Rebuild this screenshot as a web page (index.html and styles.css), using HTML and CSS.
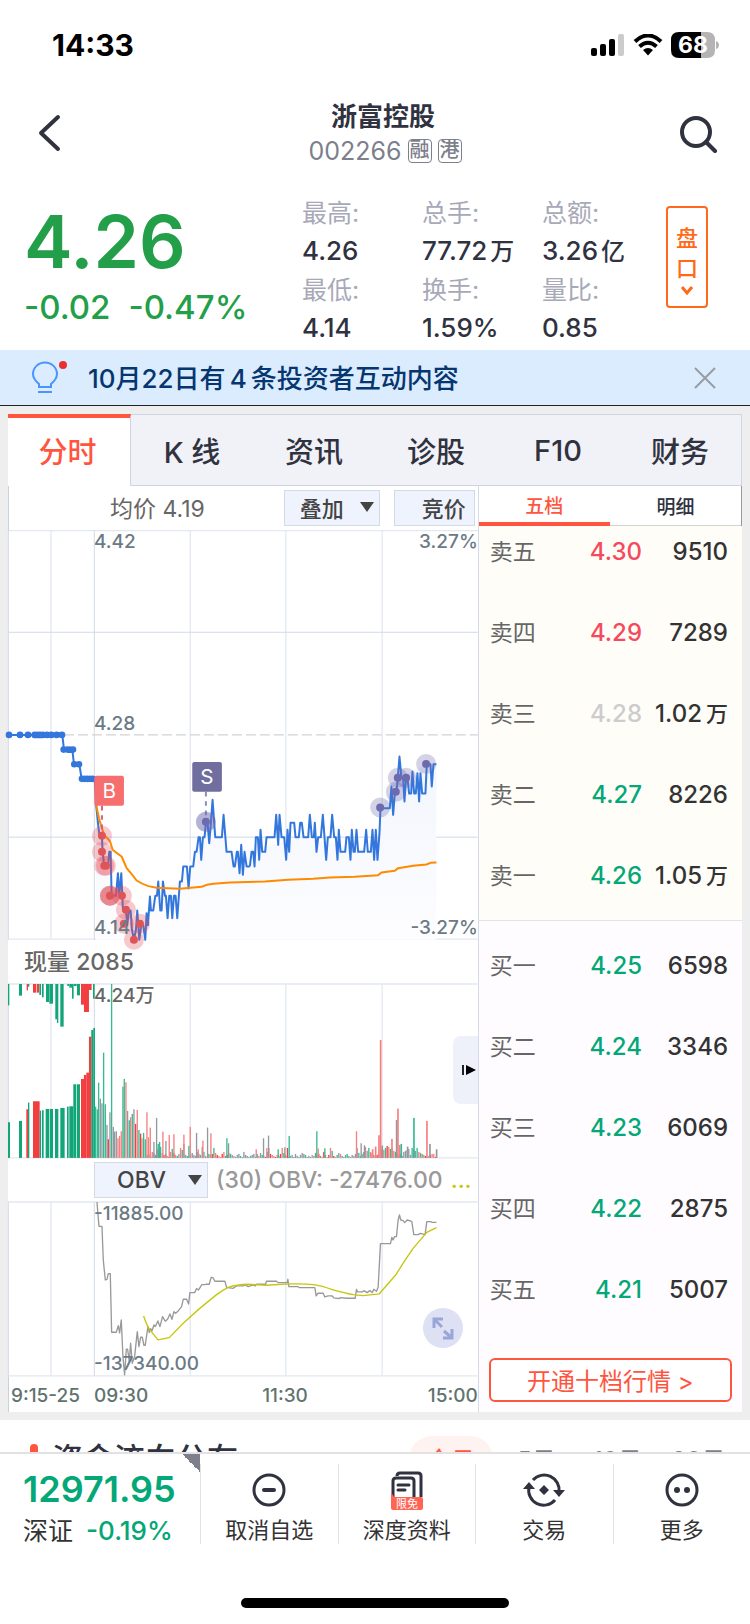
FILE: index.html
```html
<!DOCTYPE html>
<html lang="zh-CN">
<head>
    <meta charset="UTF-8">
    <meta name="viewport" content="width=device-width, initial-scale=1.0">
    <title>浙富控股 002266</title>
    <link rel="stylesheet" href="styles.css">
</head>
<body>

    <!-- 状态栏 -->
    <div class="status-bar">
        <span class="clock">14:33</span>
        <div class="status-icons">
            <svg width="34" height="22" viewBox="0 0 34 22">
                <rect x="0" y="14" width="6" height="8" rx="2"/>
                <rect x="9" y="10" width="6" height="12" rx="2"/>
                <rect x="18" y="5" width="6" height="17" rx="2"/>
                <rect x="27" y="0" width="6" height="22" rx="2" fill="#ccc"/>
            </svg>
            <svg width="30" height="22" viewBox="0 0 30 22">
                <path d="M2 7.500Q15-4.500 28 7.500M6.500 12.500Q15 5 23.500 12.500" fill="none" stroke="#000" stroke-width="4"/>
                <path d="M10 16Q15 12 20 16L15 21.500Z"/>
            </svg>
            <svg width="48" height="26" viewBox="0 0 48 26">
                <path d="M8 0H30V26H8Q0 26 0 18V8Q0 0 8 0Z"/>
                <path d="M30 0H36Q44 0 44 8V18Q44 26 36 26H30ZM45 9Q48 10 48 13Q48 16 45 17Z" fill="#b4b4b4"/>
                <text x="22" y="21" text-anchor="middle" font-size="23" font-weight="700" fill="#fff">68</text>
            </svg>
        </div>
    </div>

    <!-- 标题栏 -->
    <header class="nav">
        <button class="nav-btn" aria-label="返回">
            <svg width="40" height="40" viewBox="0 0 40 40"><path d="M20 4L3 20L20 36" fill="none" stroke="#30323f" stroke-width="4" stroke-linecap="round" stroke-linejoin="round"/></svg>
        </button>
        <div class="nav-title">
            <h1>浙富控股</h1>
            <p>002266 <span class="badge">融</span><span class="badge">港</span></p>
        </div>
        <button class="nav-btn" aria-label="搜索">
            <svg width="40" height="40" viewBox="0 0 40 40"><circle cx="18" cy="19" r="14" fill="none" stroke="#30323f" stroke-width="4"/><path d="M28 29L37 38" stroke="#30323f" stroke-width="4" stroke-linecap="round"/></svg>
        </button>
    </header>

    <!-- 行情 -->
    <section class="quote">
        <div class="price">
            <div class="price-now">4.26</div>
            <div class="price-change"><span>-0.02</span><span>-0.47%</span></div>
        </div>
        <dl class="stats">
            <div><dt>最高:</dt><dd>4.26</dd></div>
            <div><dt>总手:</dt><dd>77.72<i>万</i></dd></div>
            <div><dt>总额:</dt><dd>3.26<i>亿</i></dd></div>
            <div><dt>最低:</dt><dd>4.14</dd></div>
            <div><dt>换手:</dt><dd>1.59%</dd></div>
            <div><dt>量比:</dt><dd>0.85</dd></div>
        </dl>
        <button class="pankou">
            <span>盘</span>
            <span>口</span>
            <svg width="14" height="12" viewBox="0 0 14 12"><path d="M2 3L7 9L12 3" fill="none" stroke="#ff6a1a" stroke-width="3"/></svg>
        </button>
    </section>

    <!-- 提示条 -->
    <div class="notice">
        <svg class="bulb" width="36" height="34" viewBox="0 0 36 34">
            <path d="M7 26V23Q1 18 1 13A12 11.500 0 0 1 25 13Q25 18 19 23V26ZM6 31H20" fill="none" stroke="#4a94ff" stroke-width="2"/>
            <circle cx="31" cy="4" r="4" fill="#e93030"/>
        </svg>
        <a href="#">10月22日有<i>4</i>条投资者互动内容</a>
        <button class="close" aria-label="关闭">
            <svg width="22" height="22" viewBox="0 0 22 22"><path d="M1 1L21 21M21 1L1 21" stroke="#999ca3" stroke-width="2"/></svg>
        </button>
    </div>

    <main class="panel">
        <nav class="tabs">
            <button class="active">分时</button>
            <button>K 线</button>
            <button>资讯</button>
            <button>诊股</button>
            <button>F10</button>
            <button>财务</button>
        </nav>

        <div class="content">
            <div class="charts">
                <div class="toolbar">
                    <span class="avg">均价 4.19</span>
                    <button class="tool">叠加 <svg width="14" height="10" viewBox="0 0 14 10"><path d="M0 0H14L7 10Z" fill="#444"/></svg></button>
                    <button class="tool tool-right">竞价</button>
                </div>

                <!-- 分时图 -->
                <div class="chart">
                    <svg viewBox="0 0 1410 1230">
                        <defs>
                            <linearGradient id="area" x1="0" y1="0" x2="0" y2="1">
                                <stop offset="0" stop-color="#f3f6fd"/>
                                <stop offset="1" stop-color="#fdfdff"/>
                            </linearGradient>
                        </defs>
                        <path class="grid" d="M129 0V1230M547 0V1230M834 0V1230M1123 0V1230M0 2H1410M0 1228H1410"/>
                        <path class="grid-dark" d="M1 0V1230M259 0V1230M0 307H1410M0 922H1410"/>
                        <path d="M0 615H1410" stroke="#cfd3d6" stroke-width="4" stroke-dasharray="30 12"/>
                        <g transform="translate(-24 510)">
                            <path fill="url(#area)" d="M288 325L335 588L402 720L450 600L540 545L585 456L638 370L690 456L800 440L900 412L1130 456L1142 325L1195 234L1281 193H1310V720H288Z"/>
                            <path class="line-price" d="M24 105H187L192 149H217L222 193H238L245 237H284L289 320L294 369L299 412H306L308 456L313 500H324L328 456H332L335 588H348L354 520L358 588L364 520L369 632H378L382 676L386 640L392 632L396 690L402 720L408 690L412 632L418 720L424 676H430L436 720L440 640L444 676L450 590L453 632H460L466 588H471L475 545L481 632H485L489 545L495 588H498L503 655L508 588H513L517 655L522 588H527L532 655L540 545H546L550 500H561L566 566L571 500H580L585 456H590L596 412H600L604 480L609 412H614L618 369H623L628 430L633 369L638 300L646 412H666L671 345L680 456H695L701 500H705L711 456H714L719 520L724 435L729 525L734 456L740 500H750"/>
                            <path class="line-price" transform="translate(690 0)" d="M60 500L65 456H70L74 500L78 412H84L88 480L92 390L97 456H106L110 412H134L139 345L145 435L149 345L155 412H163L169 480L173 390L178 456L182 369H193L197 412H207L211 369H216L221 412H235L240 345L246 412H252L255 369L260 456L265 412H273L279 345L289 480L294 412H302L307 345L313 412H318L323 480L327 390L332 456H346L350 412H357L362 480L366 390L371 456H375L380 390L385 456H403L409 390L414 456H423L428 390L433 480L438 390L443 480L449 400L452 325H480L485 260L490 345L495 281L500 276L504 234L509 170L515 234H520L524 305L529 234H533L538 281H544L548 215L553 281H558L563 220L568 305L572 220L577 281H587L591 193H602L606 260L611 193H620"/>
                            <path class="line-avg" d="M289 318L297 355L312 405L330 424L338 450Q350 460 365 470L380 505Q395 522 410 542Q425 552 445 559L470 564L540 567L605 561Q620 554 640 552L690 548L795 545L865 540L940 537L990 533L1065 531L1135 526L1145 518L1185 513L1195 505L1240 498L1280 494L1292 489L1310 488"/>
                            <!-- 集合竞价点 -->
                            <path class="dots" d="M27 105h0M60 105h0M84 105h0M104 105h0M112 105h0M120 105h0M128 105h0M141 105h0M154 105h0M170 105h0M186 105h0M191 149h0M203 149h0M211 149h0M219 149h0M223 193h0M237 193h0M246 237h0M254 237h0M262 237h0M270 237h0M278 237h0"/>
                            <path d="M306 318V400" stroke="#d9627a" stroke-width="6" stroke-dasharray="14 14"/>
                            <path d="M618 276V360" stroke="#8d8bc4" stroke-width="6" stroke-dasharray="14 14"/>
                            <g class="buys">
                                <circle cx="306" cy="408" r="30"/><circle cx="306" cy="456" r="30"/>
                                <circle cx="313" cy="498" r="30"/><circle cx="318" cy="498" r="30"/>
                                <circle cx="330" cy="588" r="30"/><circle cx="330" cy="588" r="30"/><circle cx="330" cy="588" r="30"/>
                                <circle cx="366" cy="588" r="30"/><circle cx="378" cy="630" r="30"/>
                                <circle cx="372" cy="672" r="30"/><circle cx="402" cy="720" r="30"/><circle cx="420" cy="672" r="30"/>
                            </g>
                            <path class="buy-dots" d="M306 408h0M306 456h0M313 498h5M330 588h0M366 588h0M378 630h0M372 672h0M402 720h0M420 672h0"/>
                            <g class="sells">
                                <circle cx="618" cy="366" r="30"/><circle cx="618" cy="366" r="30"/><circle cx="1141" cy="323" r="30"/>
                                <circle cx="1188" cy="276" r="30"/><circle cx="1194" cy="234" r="30"/>
                                <circle cx="1219" cy="234" r="30"/><circle cx="1279" cy="192" r="30"/>
                            </g>
                            <path class="sell-dots" d="M618 366h0M1141 323h0M1188 276h0M1194 234h0M1219 234h0M1279 192h0"/>
                            <rect x="283" y="228" width="89" height="90" rx="6" fill="#f66e6e"/>
                            <rect x="577" y="186" width="89" height="90" rx="6" fill="#6f6e9f"/>
                            <text class="flag" x="328" y="295">B</text>
                            <text class="flag" x="621" y="253">S</text>
                        </g>
                    </svg>
                    <span class="label top-left">4.42</span>
                    <span class="label top-right">3.27%</span>
                    <span class="label mid-left">4.28</span>
                    <span class="label bottom-left">4.14</span>
                    <span class="label bottom-right">-3.27%</span>
                </div>

                <div class="volume-title">现量 2085</div>

                <!-- 成交量 -->
                <div class="chart">
                    <svg viewBox="0 0 1410 522">
                        <path class="grid" d="M129 0V522M547 0V522M834 0V522M1123 0V522M0 0H1410M0 522H1410"/>
                        <path class="grid-dark" d="M1 0V522M259 0V522"/>
                        <g id="volume" transform="translate(-24 -132)"></g>
                    </svg>
                    <span class="label label-dark top-left">4.24万</span>
                    <button class="expand-side" aria-label="展开">
                        <svg width="14" height="10" viewBox="0 0 14 10"><path d="M4 0L14 5L4 10Z"/><path d="M1 0V10" stroke="#222" stroke-width="2"/></svg>
                    </button>
                </div>

                <div class="indicator">
                    <button class="tool tool-obv">OBV <svg width="14" height="10" viewBox="0 0 14 10"><path d="M0 0H14L7 10Z" fill="#444"/></svg></button>
                    <span>(30) OBV: -27476.00</span>
                    <span class="more">...</span>
                </div>

                <!-- OBV -->
                <div class="chart">
                    <svg viewBox="0 0 1410 522">
                        <path class="grid" d="M129 0V522M547 0V522M834 0V522M1123 0V522M0 0H1410M0 522H1410"/>
                        <path class="grid-dark" d="M1 0V522M259 0V522"/>
                        <g transform="translate(-24 -156)">
                            <path class="line-obv" d="M291 156L297 229H306L310 330L316 390L321 388L325 371H331L335 547H349L355 527L359 549L364 510L369 620L374 675L379 598H383L388 635L392 580L397 640L404 620L412 545L417 590L422 562H427L432 586H436L444 530L448 548L452 536L456 543L462 525L466 530L474 513L480 530L488 500L496 514L503 508L510 492L516 508L522 485L527 490L535 483L545 470L550 448H560L566 462L570 428H584L590 416L596 420L606 404H614L618 403H628L634 382L640 384L645 394H675L680 412L700 415L710 408H730L735 405L745 410L760 405L765 408L770 403H797L800 394H830L834 398H862L864 388L867 410H895L898 413H945L949 438L954 430H970L975 441L985 438H997L1002 444L1017 446L1022 443L1040 445H1066L1070 418L1073 426H1088L1092 422L1102 428L1110 422L1117 428L1122 418L1130 424L1135 412L1142 281H1172L1176 262L1180 270L1184 260H1190L1195 210L1199 195L1203 210L1210 212L1215 218L1222 210L1236 214L1242 254H1255L1262 250L1276 254L1281 215H1292L1297 217H1310"/>
                            <path class="line-maobv" d="M431 498Q440 525 450 540L474 570L508 563L550 520Q600 473 650 434Q665 422 685 412Q710 404 745 403L800 406L870 402Q915 401 940 404Q965 407 1000 420Q1035 430 1060 434L1090 437L1138 432L1190 372Q1215 330 1240 295L1281 247L1310 233"/>
                        </g>
                    </svg>
                    <span class="label top-left">-11885.00</span>
                    <span class="label bottom-left">-137340.00</span>
                    <button class="fullscreen" aria-label="全屏">
                        <svg width="40" height="40" viewBox="0 0 40 40"><path d="M11 20V11H20M11 11L19 19M29 21V30H20M29 30L21 23" fill="none" stroke="#9aa6d8" stroke-width="3"/></svg>
                    </button>
                </div>

                <div class="axis">
                    <span>9:15-25</span>
                    <span>09:30</span>
                    <span class="noon">11:30</span>
                    <span>15:00</span>
                </div>
            </div>

            <!-- 五档盘口 -->
            <aside class="book">
                <div class="book-tabs">
                    <button class="active">五档</button>
                    <button>明细</button>
                </div>
                <div class="book-sell">
                    <table>
                        <tr><th>卖五</th><td class="red">4.30</td><td>9510</td></tr>
                        <tr><th>卖四</th><td class="red">4.29</td><td>7289</td></tr>
                        <tr><th>卖三</th><td class="flat">4.28</td><td>1.02<i>万</i></td></tr>
                        <tr><th>卖二</th><td class="green">4.27</td><td>8226</td></tr>
                        <tr><th>卖一</th><td class="green">4.26</td><td>1.05<i>万</i></td></tr>
                    </table>
                </div>
                <div class="book-buy">
                    <table>
                        <tr><th>买一</th><td class="green">4.25</td><td>6598</td></tr>
                        <tr><th>买二</th><td class="green">4.24</td><td>3346</td></tr>
                        <tr><th>买三</th><td class="green">4.23</td><td>6069</td></tr>
                        <tr><th>买四</th><td class="green">4.22</td><td>2875</td></tr>
                        <tr><th>买五</th><td class="green">4.21</td><td>5007</td></tr>
                    </table>
                </div>
                <div class="book-more">
                    <button class="open-ten">开通十档行情 &gt;</button>
                </div>
            </aside>
        </div>
    </main>

    <!-- 资金流向 -->
    <section class="funds">
        <h2>资金流向分布</h2>
        <div class="days">
            <button class="active">今日</button>
            <button>5日</button>
            <button>10日</button>
            <button>20日</button>
        </div>
    </section>

    <!-- 底部栏 -->
    <footer class="bottom-bar">
        <div class="bottom-items">
            <a class="index" href="#">
                <strong>12971.95</strong>
                <span>深证 <em>-0.19%</em></span>
            </a>
            <button>
                <svg width="44" height="40" viewBox="0 0 44 40"><circle cx="22" cy="20" r="15" fill="none" stroke="#30323f" stroke-width="3"/><path d="M17 20H27" stroke="#30323f" stroke-width="4" stroke-linecap="round"/></svg>
                取消自选
            </button>
            <button>
                <svg width="44" height="40" viewBox="0 0 44 40">
                    <path d="M12 6Q12 3 15 3H33Q36 3 36 6V27" fill="none" stroke="#30323f" stroke-width="3"/>
                    <path d="M8 27V11Q8 8 11 8H26Q29 8 29 11V27" fill="none" stroke="#30323f" stroke-width="3"/>
                    <path d="M13 15H24M13 20H20" stroke="#30323f" stroke-width="3" stroke-linecap="round"/>
                    <path d="M6 22L9 27H36Q38 27 38 29V38Q38 40 36 40H8Q6 40 6 38Z" fill="#ff6556"/>
                    <text x="22" y="38" text-anchor="middle" font-size="11" fill="#fff">限免</text>
                </svg>
                深度资料
            </button>
            <button>
                <svg width="44" height="40" viewBox="0 0 44 40">
                    <path d="M11 10A15 15 0 0 1 37 22M33 30A15 15 0 0 1 7 17" fill="none" stroke="#30323f" stroke-width="3"/>
                    <path d="M1 19L7 12L13 19ZM31 20H43L37 27ZM22 15L27 20L22 25L17 20Z" fill="#30323f"/>
                </svg>
                交易
            </button>
            <button>
                <svg width="44" height="40" viewBox="0 0 44 40"><circle cx="22" cy="20" r="15" fill="none" stroke="#30323f" stroke-width="3"/><circle cx="17" cy="20" r="3" fill="#30323f"/><circle cx="27" cy="20" r="3" fill="#30323f"/></svg>
                更多
            </button>
        </div>
        <div class="home-indicator"></div>
    </footer>

    <script src="script.js"></script>
</body>
</html>
```
FILE: styles.css
```css
* {
    box-sizing: border-box;
}
body {
    margin: 0;
    min-height: 100vh;
    display: flex;
    flex-direction: column;
    font-family: Inter, "Noto Sans CJK SC", sans-serif;
    background-color: #fff;
    color: #30323f;
}
button {
    margin: 0;
    padding: 0;
    border: none;
    background: none;
    color: inherit;
    font-family: inherit;
    cursor: pointer;
}
a {
    color: inherit;
    text-decoration: none;
}
i, em {
    font-style: normal;
}
svg {
    flex: none;
}
h1, h2, p, dl, dd {
    margin: 0;
}

/* 状态栏 */
.status-bar {
    display: flex;
    justify-content: space-between;
    align-items: center;
    height: 90px;
    padding: 0 31px 0 52px;
    color: #000;
}
.clock {
    font-size: 30px;
    font-weight: 700;
}
.status-icons {
    display: flex;
    align-items: center;
    gap: 8px;
}

/* 标题栏 */
.nav {
    display: flex;
    justify-content: space-between;
    align-items: center;
    height: 98px;
    padding: 0 32px 12px 38px;
}
.nav-btn {
    display: flex;
}
.nav-title {
    display: flex;
    flex-direction: column;
    align-items: center;
    padding-left: 14px;
}
.nav-title h1 {
    padding-right: 4px;
    font-size: 26px;
    line-height: 36px;
    font-weight: 700;
}
.nav-title p {
    display: flex;
    align-items: center;
    gap: 4px;
    line-height: 32px;
    font-size: 25px;
    color: #7d7f8c;
}
.badge {
    width: 24px;
    height: 24px;
    margin-left: 2px;
    border: 1px solid #7d7f8c;
    border-radius: 4px;
    font-size: 20px;
    line-height: 21px;
    font-weight: 500;
    text-align: center;
}

/* 行情 */
.quote {
    display: flex;
    align-items: flex-start;
    height: 162px;
    padding: 6px 42px 0 24px;
}
.price {
    flex: 1;
    color: #229f48;
    font-weight: 500;
}
.price-now {
    margin-top: 8px;
    font-size: 73px;
    line-height: 80px;
    font-weight: 600;
}
.price-change {
    display: flex;
    gap: 18px;
    margin-top: 3px;
    font-size: 33px;
    line-height: 44px;
}
.stats {
    display: grid;
    grid-template-columns: repeat(3, 120px);
    font-size: 25px;
    line-height: 38px;
}
.stats dt {
    color: #a8a9b8;
}
.stats dd {
    font-size: 26px;
    font-weight: 500;
}
.stats i {
    margin-left: 3px;
    font-size: 24px;
}
.pankou {
    display: flex;
    flex-direction: column;
    align-items: center;
    justify-content: center;
    gap: 2px;
    width: 42px;
    height: 102px;
    margin-top: 12px;
    margin-left: 4px;
    padding-top: 6px;
    border: 2px solid #ff6a1a;
    border-radius: 4px;
    font-size: 22px;
    line-height: 28px;
    font-weight: 500;
    color: #ff6a1a;
}

/* 提示条 */
.notice {
    display: flex;
    align-items: center;
    height: 56px;
    padding: 0 34px 0 32px;
    background-color: #dbecff;
    border-bottom: 1px solid #222;
    font-size: 26px;
    font-weight: 500;
    color: #06366f;
}
.notice a {
    flex: 1;
    margin-left: 20px;
    padding-bottom: 2px;
}
.notice i {
    margin: 0 4px;
}
.close {
    display: flex;
}

/* 主面板 */
.panel {
    padding: 8px 8px;
    background-color: #eee;
}
.tabs {
    display: grid;
    grid-template-columns: repeat(6, 1fr);
    height: 72px;
    background-color: #f1f2f7;
    border: 1px solid #d0d4e2;
}
.tabs button {
    font-size: 29px;
    font-weight: 500;
}
.tabs .active {
    margin: -1px 0 -1px -1px;
    padding: 0 3px 4px 0;
    background-color: #fff;
    border-top: 4px solid #ff553f;
    border-right: 1px solid #d0d4e2;
    color: #ff553f;
}
.content {
    display: flex;
    background-color: #fff;
}
.charts {
    flex: 1;
    min-width: 0;
}
.toolbar {
    display: flex;
    align-items: center;
    height: 44px;
    padding-right: 3px;
    border-left: 1px solid #c5d3e0;
    font-size: 23px;
    font-weight: 500;
    color: #666;
}
.avg {
    flex: 1;
    margin-left: 101px;
    padding-bottom: 3px;
    font-weight: 400;
}
.tool {
    display: flex;
    align-items: center;
    justify-content: space-between;
    width: 96px;
    height: 36px;
    padding: 0 5px 3px 15px;
    background-color: #eff3fd;
    border: 1px solid #d4d9e6;
    font-size: 22px;
    font-weight: 500;
    color: #444;
}
.tool-right {
    justify-content: flex-end;
    width: 81px;
    margin-left: 14px;
    padding-right: 8px;
}
.chart {
    position: relative;
}
.chart > svg {
    display: block;
    width: 100%;
    height: auto;
    overflow: visible;
}
.grid {
    stroke: #e3e8f1;
    stroke-width: 4;
}
.grid-dark {
    stroke: #d0d9e6;
    stroke-width: 3;
}
.line-price, .line-avg, .line-obv, .line-maobv {
    fill: none;
    stroke-linejoin: round;
}
.line-price {
    stroke: #3377dd;
    stroke-width: 6;
}
.line-avg {
    stroke: #ff8a00;
    stroke-width: 6;
}
.line-obv {
    stroke: #999;
    stroke-width: 4;
}
.line-maobv {
    stroke: #c6c60c;
    stroke-width: 4;
}
.dots {
    stroke: #3377dd;
    stroke-width: 20;
    stroke-linecap: round;
}
.buys {
    fill: #e04c58;
    fill-opacity: 0.3;
}
.buy-dots {
    stroke: #de5558;
    stroke-width: 24;
    stroke-linecap: round;
}
.sells {
    fill: #6d6bb0;
    fill-opacity: 0.3;
}
.sell-dots {
    stroke: #6d6bb0;
    stroke-width: 24;
    stroke-linecap: round;
}
.flag {
    font-size: 62px;
    fill: #fff;
    text-anchor: middle;
}
.label {
    position: absolute;
    font-size: 19px;
    line-height: 24px;
    font-weight: 500;
    color: #6b7a85;
}
.label-dark {
    color: #666;
}
.top-left {
    top: 0;
    left: 86px;
}
.top-right {
    top: 0;
    right: 0;
}
.mid-left {
    top: 182px;
    left: 86px;
}
.bottom-left {
    bottom: 0;
    left: 86px;
}
.bottom-right {
    bottom: 0;
    right: 0;
}
.volume-title {
    padding-left: 16px;
    font-size: 23px;
    line-height: 44px;
    font-weight: 500;
    color: #666;
}
.expand-side {
    position: absolute;
    top: 52px;
    right: 0;
    display: flex;
    align-items: center;
    justify-content: flex-end;
    width: 25px;
    height: 68px;
    padding-right: 2px;
    background-color: #eef1fa;
    border-radius: 8px 0 0 8px;
}
.indicator {
    display: flex;
    align-items: center;
    gap: 8px;
    height: 44px;
    padding-left: 86px;
    font-size: 23px;
    font-weight: 500;
    color: #999;
    white-space: nowrap;
}
.tool-obv {
    width: 114px;
    padding-bottom: 0;
    padding-left: 22px;
    font-size: 23px;
}
.more {
    color: #c6c60c;
}
.fullscreen {
    position: absolute;
    right: 15px;
    bottom: 28px;
    display: flex;
    width: 40px;
    height: 40px;
    background-color: #dee1f4;
    border-radius: 50%;
}
.axis {
    display: flex;
    height: 36px;
    padding-left: 2px;
    border-left: 1px solid #c5d3e0;
    font-size: 19px;
    line-height: 40px;
    font-weight: 500;
    color: #617370;
}
.axis span:first-child {
    width: 83px;
    white-space: nowrap;
}
.axis .noon {
    flex: 1;
    padding-right: 6px;
    text-align: center;
}

/* 五档盘口 */
.book {
    display: flex;
    flex-direction: column;
    width: 36%;
    background-color: #fefcff;
    border-left: 1px solid #d4dbe8;
}
.book-tabs {
    display: flex;
    height: 40px;
    background-color: #fff;
    border-right: 1px solid #999;
}
.book-tabs button {
    flex: 1;
    border-bottom: 1px solid #cfd6d0;
    font-size: 19px;
    font-weight: 500;
}
.book-tabs .active {
    border-bottom: 4px solid #ff553f;
    color: #ff553f;
}
.book table {
    width: 100%;
    border-collapse: collapse;
}
.book tr {
    height: 81px;
}
.book tr:last-child {
    height: 59px;
}
.book th, .book td {
    padding: 0;
    vertical-align: top;
    text-align: right;
    font-size: 24px;
    line-height: 30px;
    font-weight: 500;
    white-space: nowrap;
    color: #333;
}
.book th {
    width: 60px;
    text-align: left;
    font-size: 23px;
    font-weight: 400;
    color: #666;
}
.book td:last-child {
    width: 86px;
}
.book i {
    margin-left: 4px;
    font-size: 22px;
}
.book .red {
    color: #f54a5c;
}
.book .green {
    color: #04a777;
}
.book .flat {
    color: #ccc;
}
.book-sell {
    padding: 11px 14px 0 11px;
    background-color: #fffdf8;
    border-bottom: 1px solid #e3e3e8;
}
.book-buy {
    padding: 30px 14px 0 11px;
}
.book-more {
    padding: 24px 10px 0;
}
.open-ten {
    width: 100%;
    height: 44px;
    padding-bottom: 2px;
    border: 2px solid #ff553f;
    border-radius: 6px;
    background-color: #fff;
    font-size: 24px;
    color: #ff553f;
}

/* 资金流向 */
.funds {
    display: flex;
    justify-content: space-between;
    height: 32px;
    padding: 16px 11px 0 30px;
    overflow: hidden;
}
.funds h2 {
    display: flex;
    gap: 14px;
    font-size: 31px;
    line-height: 46px;
    font-weight: 500;
}
.funds h2::before {
    content: "";
    width: 8px;
    height: 30px;
    margin-top: 8px;
    border-radius: 4px;
    background-color: #ff553f;
}
.days {
    display: flex;
}
.days button {
    width: 81px;
    height: 46px;
    border-radius: 23px;
    font-size: 24px;
    color: #7d7f8c;
}
.days .active {
    width: 84px;
    margin-right: 3px;
    background-color: #fff3f1;
    color: #ff553f;
}

/* 底部栏 */
.bottom-bar {
    flex: 1;
    display: flex;
    flex-direction: column;
    justify-content: space-between;
    align-items: center;
    padding-bottom: 16px;
    background-color: #fff;
    border-top: 2px solid #e2e2e2;
}
.bottom-items {
    display: grid;
    grid-template-columns: 200px repeat(4, 1fr);
    width: 100%;
    height: 90px;
}
.bottom-items button {
    display: flex;
    flex-direction: column;
    align-items: center;
    height: 80px;
    margin-top: 10px;
    padding-top: 6px;
    border-left: 1px solid #e2e2e2;
    font-size: 22px;
    line-height: 40px;
    color: #333;
}
.index {
    display: flex;
    flex-direction: column;
    padding: 12px 0 0 23px;
    background: linear-gradient(45deg, transparent 50%, #7d7f8c 50%) right top / 18px 18px no-repeat;
    font-size: 25px;
    color: #333;
}
.index strong {
    font-size: 36px;
    line-height: 46px;
    font-weight: 600;
    color: #04a777;
}
.index span {
    line-height: 38px;
    white-space: nowrap;
}
.index em {
    margin-left: 6px;
    font-size: 26px;
    font-weight: 500;
    color: #04a777;
}
.home-indicator {
    width: 268px;
    height: 10px;
    border-radius: 5px;
    background-color: #000;
}
```
FILE: script.js
```javascript
// 成交量柱: x, 宽, 顶, 底, 颜色
const volume = document.getElementById('volume');
const colors = { g: '#11a578', r: '#f23e3e', G: '#35bb91', R: '#f77f7f', k: '#9199a0' };
const BASE = 654;

function bar(x, w, top, bottom, c) {
    const rect = document.createElementNS('http://www.w3.org/2000/svg', 'rect');
    rect.setAttribute('x', x);
    rect.setAttribute('y', top);
    rect.setAttribute('width', w);
    rect.setAttribute('height', bottom - top);
    rect.setAttribute('fill', colors[c]);
    volume.appendChild(rect);
}

// 集合竞价 上方
[
    [24, 4, 196, 'g'], [57, 9, 167, 'g'], [80, 4, 151, 'r'], [84, 4, 140, 'g'],
    [99, 10, 158, 'r'], [111, 6, 158, 'r'], [118, 5, 165, 'g'], [126, 5, 172, 'g'],
    [138, 9, 186, 'g'], [148, 11, 191, 'g'], [166, 6, 238, 'g'], [171, 4, 249, 'g'],
    [181, 10, 260, 'g'], [202, 5, 138, 'g'], [208, 8, 143, 'g'], [216, 5, 176, 'g'],
    [222, 8, 138, 'g'], [231, 9, 166, 'g'], [243, 9, 194, 'r'], [252, 15, 216, 'r'],
    [267, 8, 150, 'r'], [279, 5, 176, 'g']
].forEach(b => bar(b[0], b[1], 132, b[2], b[3]));

// 集合竞价 下方
[
    [24, 6, 547, 'g'], [57, 9, 543, 'g'], [79, 5, 508, 'r'], [84, 4, 488, 'g'],
    [99, 20, 484, 'r'], [119, 4, 512, 'g'], [126, 5, 511, 'g'], [137, 10, 507, 'g'],
    [149, 10, 507, 'g'], [165, 10, 507, 'g'], [181, 13, 504, 'g'], [201, 5, 500, 'g'],
    [208, 12, 499, 'g'], [220, 9, 433, 'g'], [231, 9, 433, 'g'], [243, 9, 417, 'r'],
    [252, 7, 405, 'r'], [259, 8, 398, 'r'], [267, 7, 290, 'r'], [274, 6, 270, 'g'],
    [280, 5, 264, 'g']
].forEach(b => bar(b[0], b[1], b[2], BASE, b[3]));

// 小成交量, 每个字符一分钟 (36进制高度)
const small = '34265397b53421695324a8e3214532643b621434a5321462354321342163'
    + '2123414253216a4321324a5321231421354312132534216313a72135421342'
    + '1324a5246b7a653234798acb9a76534267893a87a65432123441235642';
for (let i = 0; i < small.length; i++) {
    const x = 440 + i * 5;
    if (x < 1310) bar(x, 4, BASE - parseInt(small[i], 36) * 3, BASE, 'kRGkrkGR'[(i * 5 + (i >> 2)) % 8]);
}

[
    [285, 500, 'G'], [290, 508, 'G'], [294, 428, 'G'], [299, 476, 'k'], [304, 490, 'k'],
    [309, 338, 'G'], [314, 493, 'G'], [319, 555, 'k'], [323, 598, 'r'], [328, 517, 'k'],
    [333, 132, 'G'], [338, 561, 'k'], [342, 575, 'k'], [347, 574, 'k'], [352, 595, 'R'],
    [357, 588, 'R'], [362, 574, 'R'], [367, 440, 'G'], [371, 417, 'G'], [376, 427, 'R'],
    [381, 513, 'k'], [386, 541, 'G'], [390, 532, 'R'], [395, 522, 'G'], [400, 508, 'k'],
    [405, 552, 'r'], [410, 510, 'R'], [415, 570, 'G'], [420, 581, 'r'], [424, 595, 'R'],
    [429, 579, 'G'], [434, 598, 'G'], [439, 517, 'R'], [444, 592, 'R'], [449, 563, 'R'],
    [460, 606, 'k'], [468, 534, 'k'], [473, 612, 'G'], [477, 606, 'G'], [487, 575, 'R'],
    [496, 603, 'k'], [506, 585, 'R'], [520, 583, 'R'], [550, 584, 'R'], [565, 618, 'G'],
    [569, 561, 'R'], [588, 579, 'k'], [593, 628, 'R'], [607, 602, 'R'], [621, 563, 'k'],
    [631, 580, 'R'], [679, 595, 'G'], [684, 610, 'k'], [767, 628, 'R'], [789, 595, 'k'],
    [799, 624, 'R'], [804, 587, 'k'], [833, 628, 'G'], [853, 622, 'k'], [861, 624, 'r'],
    [866, 588, 'G'], [949, 574, 'G'], [953, 626, 'R'], [973, 625, 'G'], [1068, 574, 'R'],
    [1082, 610, 'k'], [1092, 616, 'k'], [1116, 628, 'R'], [1125, 620, 'R'], [1135, 586, 'R'],
    [1140, 300, 'R'], [1145, 617, 'k'], [1174, 597, 'R'], [1188, 540, 'k'], [1192, 506, 'R'],
    [1197, 615, 'R'], [1202, 612, 'G'], [1221, 620, 'k'], [1240, 534, 'G'], [1279, 543, 'R'],
    [1288, 612, 'k'], [1308, 628, 'k']
].forEach(b => bar(b[0], b[0] > 1100 ? 5 : 4, b[1], BASE, b[2]));
```
